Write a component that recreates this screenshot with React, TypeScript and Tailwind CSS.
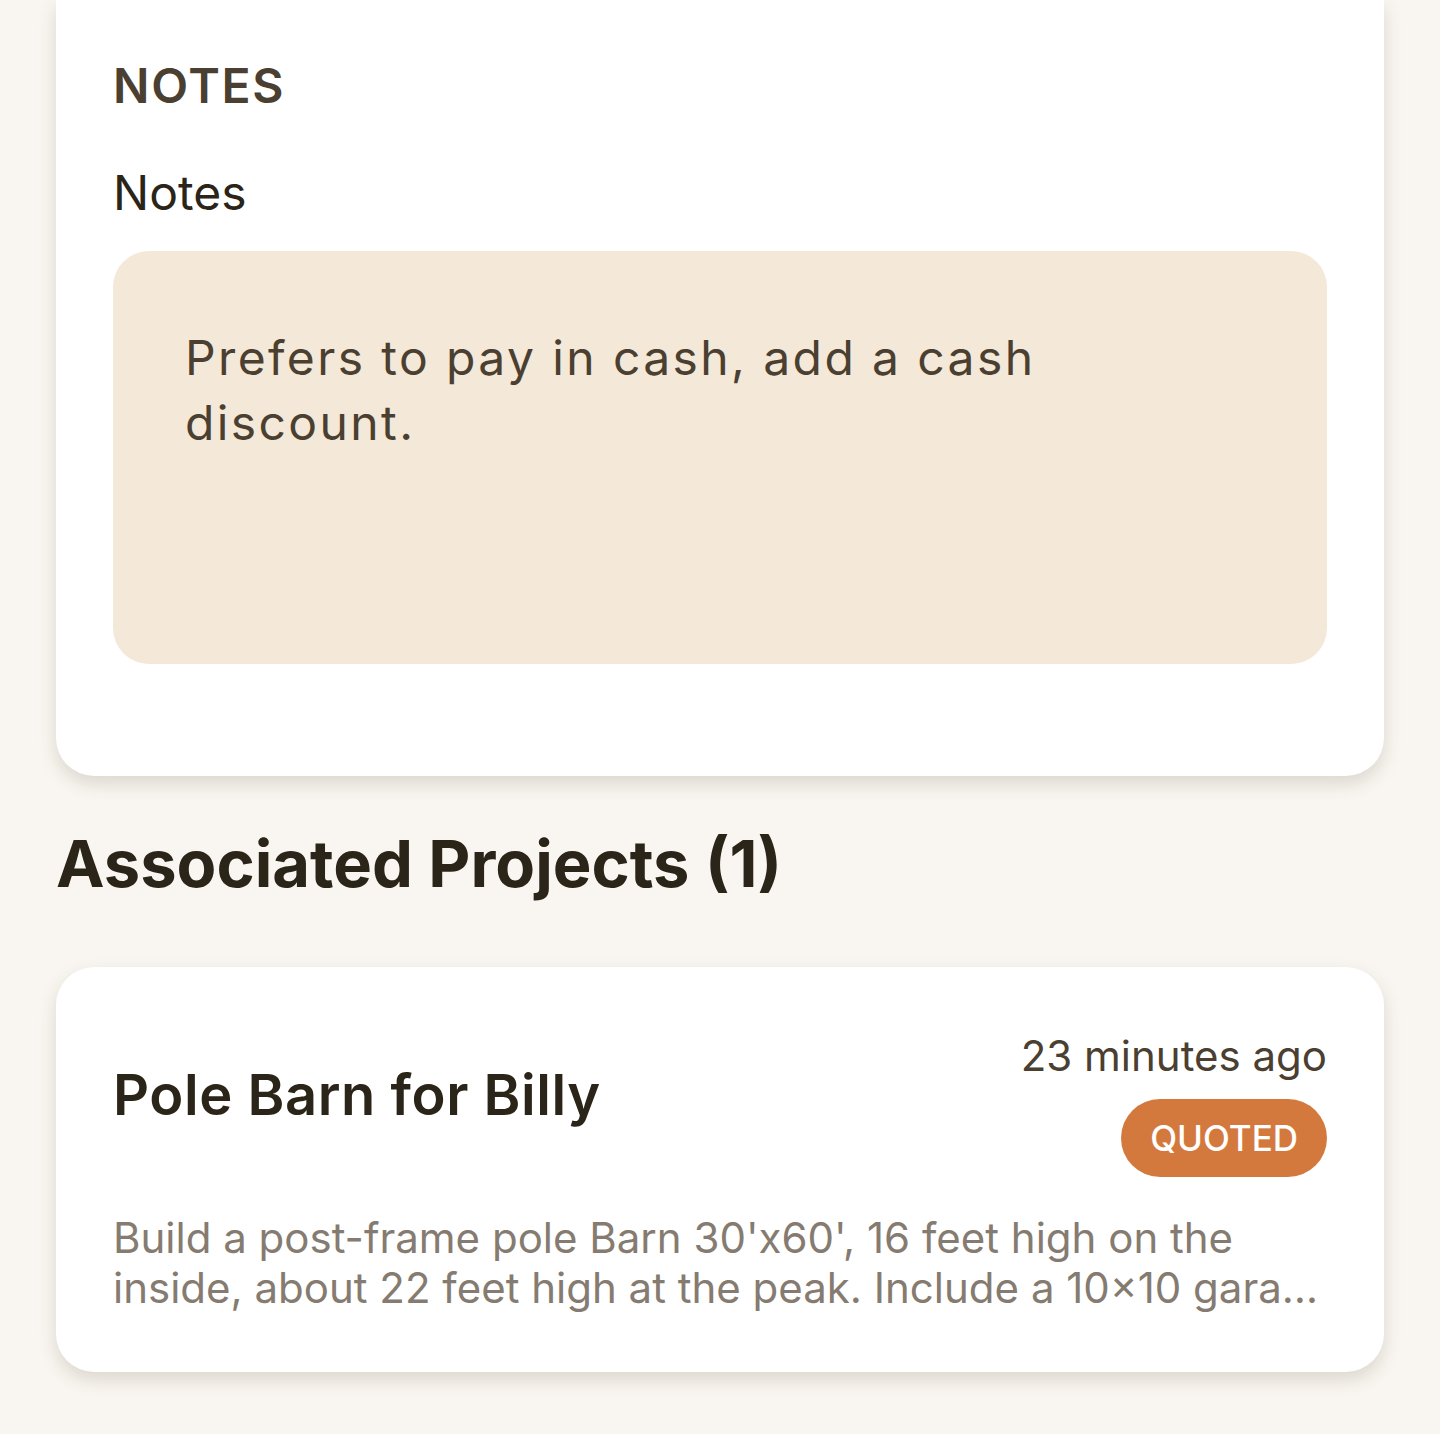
import React from "react";

const sans = { fontFamily: "Inter, 'Noto Sans', sans-serif" };

function NotesCard() {
  return (
    <section className="bg-white rounded-b-[38px] shadow-[0_8px_18px_rgba(70,55,30,0.16)] px-[57px] pt-[57px] pb-[112px]">
      <h3 className="text-[48px] leading-[58px] font-semibold tracking-[0.035em] text-[#4a3f30]">
        NOTES
      </h3>
      <label className="block mt-[49px] text-[48px] leading-[58px] text-[#2b2418]">
        Notes
      </label>
      <div className="mt-[29px] h-[413px] rounded-[36px] bg-[#f4e8d8] px-[72px] pt-[74px] text-[48px] leading-[65px] tracking-[0.05em] text-[#4a3f30]">
        <p className="max-w-[1000px]">Prefers to pay in cash, add a cash discount.</p>
      </div>
    </section>
  );
}

function ProjectCard() {
  return (
    <article className="mt-[63px] bg-white rounded-[38px] shadow-[0_8px_18px_rgba(70,55,30,0.16)] px-[57px] pt-[63px] pb-[59px]">
      <div className="flex items-start justify-between">
        <h4 className="pt-[33px] text-[56px] leading-[65px] font-semibold tracking-[0.01em] text-[#2b2418]">
          Pole Barn for Billy
        </h4>
        <div className="flex flex-col items-end">
          <span className="text-[42px] leading-[51px] text-[#4a3f30]">23 minutes ago</span>
          <span className="mt-[18px] rounded-full bg-[#d4793e] px-[29px] h-[78px] flex items-center text-[35px] font-medium text-white">
            QUOTED
          </span>
        </div>
      </div>
      <p className="mt-[36px] text-[42px] leading-[50px] text-[#857b70] line-clamp-2">
        Build a post-frame pole Barn 30'x60', 16 feet high on the inside, about 22 feet high at the peak. Include a 10×10{" "}
        <span className="break-all">garage door and a walk-in man door on the side.</span>
      </p>
    </article>
  );
}

export default function App() {
  return (
    <div className="min-h-screen bg-[#f9f6f1] px-[56px] pb-[60px]" style={sans}>
      <NotesCard />
      <h2 className="mt-[48px] text-[65px] leading-[80px] font-bold text-[#2b2418]">
        Associated Projects (1)
      </h2>
      <ProjectCard />
    </div>
  );
}
